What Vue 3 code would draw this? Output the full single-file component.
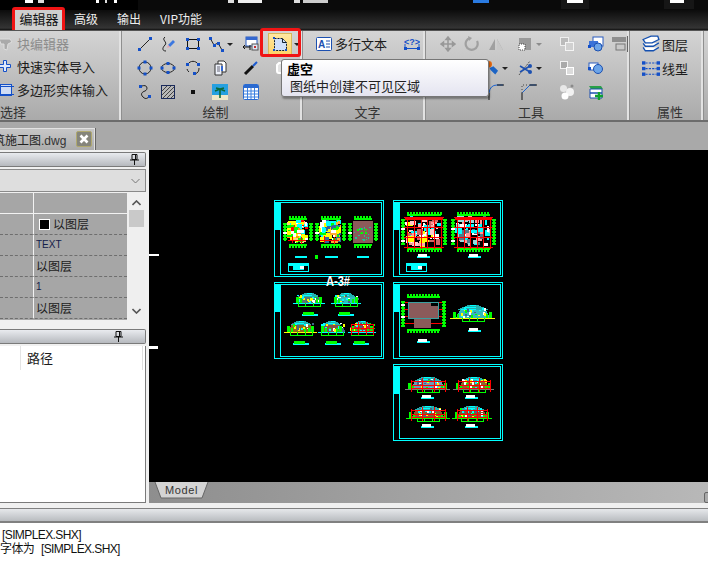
<script setup>
const B = '#1450c8';
const sq = (x, y, s = 3) => `<rect x="${x}" y="${y}" width="${s}" height="${s}" fill="${B}"/>`;

// toolbar glyphs, all on a 16x16 box
const icons = {
  line: `<path d="M3 13L13 3" stroke="#222" fill="none"/>${sq(1, 12)}${sq(12, 1)}`,
  spline: `<path d="M5 1C1 4 8 6 5 9S2 15 6 15" stroke="#222" fill="none"/><path d="M8 9l5-5 2 2-5 5z" fill="#3c78e0"/><path d="M8 9l2 2-3 1z" fill="#e8a0b0"/>`,
  rect: `<rect x="2.5" y="3.5" width="11" height="9" stroke="#111" fill="none"/>${sq(1, 2)}${sq(12, 2)}${sq(1, 11)}${sq(12, 11)}`,
  poly: `<path d="M2 2L6 9L10 7L14 14" stroke="#222" fill="none"/>${sq(1, 1)}${sq(5, 8)}${sq(9, 6)}${sq(13, 13)}`,
  xref: `<rect x="3" y="1" width="11" height="9" fill="#fff" stroke="#2a5cc0"/><rect x="3" y="1" width="11" height="3" fill="#3468d0"/><path d="M0 11h7M2 9l-2 2 2 2M7 9v5" stroke="#111" fill="none"/><rect x="9" y="8" width="6" height="6" fill="#dfe6f5" stroke="#555"/><rect x="11" y="10" width="2" height="2" fill="#c03030"/>`,
  wipe: `<path d="M2.5 2.5h8l4 4v8h-12z" fill="#cfe0fb" stroke="#123" stroke-dasharray="2 1"/><path d="M10.5 2.5v4h4" fill="none" stroke="#123"/>${sq(1, 1, 2)}${sq(13, 13, 2)}${sq(1, 13, 2)}`,
  circle: `<circle cx="8" cy="8" r="6" stroke="#222" fill="none"/>${sq(6.5, 0.5)}${sq(6.5, 12.5)}${sq(0.5, 6.5)}${sq(12.5, 6.5)}`,
  ellipse: `<ellipse cx="8" cy="8" rx="6.5" ry="4.5" stroke="#222" fill="none"/>${sq(6.5, 2)}${sq(6.5, 11)}${sq(0.5, 6.5)}${sq(12.5, 6.5)}`,
  arc: `<path d="M3 4A6 6 0 0 1 13 4M14 8A6 6 0 0 1 10 14M2 9A6 6 0 0 0 4 12" stroke="#222" fill="none"/>${sq(1, 3)}${sq(12, 3)}${sq(8, 12)}`,
  doc: `<path d="M6 1h6l2 2v9H6z" fill="#fff" stroke="#333"/><path d="M3 4h7v11H3z" fill="#eef2fb" stroke="#333"/><path d="M5 7h3M5 9h3M5 11h3" stroke="#667"/><rect x="9" y="6" width="2" height="5" fill="#3468d0"/>`,
  brush: `<path d="M2 14L10 6" stroke="#111" stroke-width="3"/><path d="M10 6l4-4" stroke="#1c5bd0" stroke-width="2"/>`,
  cloud: `<path d="M4 3h8a2 2 0 0 1 2 2v8H4a2 2 0 0 1-2-2V5z" fill="#e4e4e4" stroke="#fff" stroke-width="2"/>`,
  squiggle: `<path d="M5 2c6-2 6 4 3 5S3 10 6 13s5 1 6-1" stroke="#222" fill="none"/>${sq(2, 1)}${sq(11, 11)}`,
  hatch: `<rect x="1.5" y="1.5" width="13" height="13" fill="#b8b8b8" stroke="#1a2a5a"/><path d="M2 7l5-5M2 11l9-9M3 14L14 3M7 14l7-7M11 14l3-3" stroke="#444" fill="none"/>`,
  point: `<rect x="6" y="6" width="4" height="4" fill="#111"/>`,
  palm: `<rect x="0" y="0" width="16" height="16" fill="#26a0e0"/><rect y="11" width="16" height="5" fill="#f0e8c8"/><path d="M8 14V6M3 7l5-2 5 2M4 4l4 1 4-1" stroke="#0c6a3a" stroke-width="1.6" fill="none"/>`,
  table: `<rect x="0.5" y="0.5" width="15" height="15" rx="1" fill="#fff" stroke="#2a6ad0"/><rect x="1" y="1" width="14" height="3" fill="#2a6ad0"/><path d="M1 7h14M1 10h14M1 13h14M4.500 4v11M8 4v11M11.500 4v11" stroke="#3c80e0"/>`,
  mtext: `<rect x="0.500" y="1.500" width="15" height="13" rx="1" fill="#fff" stroke="#1c50b0"/><text x="2" y="12" font-size="10" font-weight="700" font-family="Liberation Sans" fill="#1c50b0">A</text><path d="M10 5h4M10 8h4M10 11h4" stroke="#1c50b0"/>`,
  dim: `<path d="M1 12.500h14" stroke="${B}"/>${sq(0, 11)}${sq(13, 11)}<path d="M1 8v4M15 8v4" stroke="${B}"/><text x="8" y="9" text-anchor="middle" font-size="9" font-weight="700" font-family="Liberation Sans" fill="${B}">&lt;?&gt;</text>`,
  move: `<path d="M8 1v14M1 8h14M8 1L6 3.500h4zM8 15l-2-2.500h4zM1 8l2.500-2v4zM15 8l-2.500-2v4z" stroke="#989898" stroke-width="1.500" fill="#989898"/>`,
  rotate: `<path d="M6 2a6 6 0 1 0 7 3" stroke="#a0a0a0" stroke-width="2.200" fill="none"/><path d="M4 0l4 2-3 3z" fill="#a0a0a0"/>`,
  mirror: `<path d="M7 3v11H1zM9 3v11h6z" fill="#a0a0a0"/><path d="M9 3v11h6z" fill="#c8c8c8"/>`,
  array: `<rect x="2" y="2" width="12" height="12" fill="#9a9a9a"/><rect x="2" y="8" width="6" height="6" fill="#fff" stroke="#444" stroke-dasharray="1 1"/>`,
  stack: `<rect x="1.500" y="1.500" width="8" height="8" fill="#bbb" stroke="#eee"/><rect x="6.500" y="6.500" width="8" height="8" fill="#d0d0d0" stroke="#f4f4f4"/>`,
  stack2: `<rect x="1.500" y="1.500" width="7" height="7" fill="#aaa" stroke="#f2f2f2"/><rect x="7.500" y="7.500" width="7" height="7" fill="#dcdcdc" stroke="#fff"/>`,
  copy: `<rect x="5" y="1" width="10" height="9" fill="#fff" stroke="#2a5cc0"/><rect x="1" y="5" width="9" height="6" fill="#3a72d8"/><circle cx="10" cy="11" r="4" fill="#6ca4e8" stroke="#1c50b0"/><rect x="0" y="9" width="3" height="3" fill="#1450c8"/>`,
  copy2: `<rect x="1" y="3" width="9" height="7" fill="#fff" stroke="#2a5cc0"/><circle cx="10" cy="9" r="4.500" fill="#6ca4e8" stroke="#1c50b0"/><rect x="0" y="7" width="3" height="3" fill="#1450c8"/>`,
  small: `<rect x="0" y="1" width="14" height="5" fill="#8e8e8e"/><rect x="4" y="8" width="9" height="6" fill="#c8c8c8" stroke="#777"/><path d="M15.500 0v16" stroke="#666"/>`,
  paint: `<circle cx="5" cy="4" r="3.500" fill="#e86a10"/><path d="M6 8l4-2 5 5-3 4-5-5z" fill="#1c64c4"/>`,
  scissors: `<path d="M2 15L13 1" stroke="#555" stroke-dasharray="2 1"/><path d="M3 6l10 6M3 12l10-6" stroke="#1c50b0" stroke-width="1.500"/><circle cx="13" cy="6" r="2" fill="#1c50b0"/><circle cx="13" cy="12" r="2" fill="#1c50b0"/>`,
  circles: `<circle cx="4.500" cy="4.500" r="3.500" fill="#e8e8e8"/><circle cx="11" cy="8" r="4" fill="#f2f2f2"/><circle cx="6" cy="12" r="3.500" fill="#fff"/><circle cx="13" cy="2" r="1.500" fill="#8a8a8a"/>`,
  stackAdd: `<path d="M1 2h12l2 3H3z" fill="#28a048"/><path d="M2 5h12v4H2zM2 9h12v5H2z" fill="#fff" stroke="#1c50b0"/><path d="M7 12h8M11 8v8" stroke="#10a030" stroke-width="2.400"/>`,
  fillet: `<path d="M15 1H9Q2 1 1 9" stroke="#1c64d0" fill="none"/><path d="M9 1h7M1 9v7" stroke="#111" fill="none"/>`,
  chamfer: `<path d="M15 1H9L1 9" stroke="#1c64d0" fill="none"/><path d="M9 1h7M1 9v7" stroke="#111" fill="none"/><path d="M1 9V1h8" stroke="#444" stroke-dasharray="1 2" fill="none"/>`,
  layer: `<path d="M1 4l7-3h6l1 3-6 3H3zM1 7.500l2 2.500h7l5-3M1 11l2 3h7l5-3" fill="#fff" stroke="#1450b0" stroke-width="1.200"/>`,
  ltype: `<path d="M3 3.500h10M3 8.500h10M3 13.500h10" stroke="${B}" stroke-dasharray="2 1"/>${sq(0, 2)}${sq(13, 2)}${sq(0, 7)}${sq(13, 7)}${sq(0, 12)}${sq(13, 12)}`
};

const drawTools = [
  ['line', null], ['spline', null], ['rect', null], ['poly', 'caret'], ['xref', null], ['wipe', 'hot'],
  ['circle', null], ['ellipse', null], ['arc', null], ['doc', null], ['brush', null], ['cloud', null],
  ['squiggle', null], ['hatch', null], ['point', null], ['palm', null], ['table', null], [null, null]
];

const editTools = [
  ['move', null], ['rotate', null], ['mirror', null], ['array', 'caret'], ['stack', null], ['copy', null], ['small', null],
  [null, null], [null, null], ['paint', 'caret'], ['scissors', 'caret'], ['stack2', null], ['copy2', null], [null, null],
  [null, null], [null, null], ['fillet', null], ['chamfer', null], ['circles', null], ['stackAdd', null], [null, null]
];

const topBits = [
  [25, 8, '#fff'], [38, 6, '#ddd'], [96, 3, '#fff'], [105, 2, '#ddd'], [114, 3, '#fff'],
  [228, 6, '#ddd'], [238, 24, '#eee'], [294, 6, '#ddd'], [303, 25, '#ccc'],
  [473, 16, '#2a7ae0'], [567, 16, '#fff'], [670, 14, '#fff']
];

const rows = [
  { text: '以图层', swatch: true },
  { text: 'TEXT', small: true },
  { text: '以图层' },
  { text: '1', small: true },
  { text: '以图层' }
];

// --- drawing sheets on the model canvas ---
const G = '#00ff00', R = '#ff0000', C = '#00ffff', Y = '#ffff00', W = '#ffffff';
const parts = [];
let seed = 7;
const rnd = n => {
  seed = (seed * 16807) % 2147483647;
  return seed % n;
};
const r = (x, y, w, h, c) => parts.push({ x, y, w, h, c });

function frame(x, y, w, h, c) {
  r(x, y, w, 1, c);
  r(x, y + h - 1, w, 1, c);
  r(x, y, 1, h, c);
  r(x + w - 1, y, 1, h, c);
}

function sheet(x, y) {
  frame(x, y, 110, 77, C);
  frame(x + 6, y + 2, 102, 73, C);
  r(x + 1, y + 2, 5, 28, C);
}

function walls(x, y, w, h) {
  const m = 4;
  r(x + m + 2, y + 2, w - 2 * m - 4, 2, G);
  r(x + m + 2, y + h - 4, w - 2 * m - 4, 2, G);
  r(x + 1, y + m + 3, 2, h - 2 * m - 6, G);
  r(x + w - 3, y + m + 3, 2, h - 2 * m - 6, G);
  for (let i = x + m + 2; i < x + w - m - 2; i += 3) {
    r(i, y, 2, 3, G);
    r(i, y + h - 3, 2, 3, G);
  }
  for (let j = y + m + 3; j < y + h - m - 3; j += 3) {
    r(x, j, 4, 2, j % 4 ? G : W);
    r(x + w - 4, j, 4, 2, G);
  }
}

function plan(x, y, w, h, colors, density, grid) {
  const ix = x + 4, iy = y + 4, iw = w - 8, ih = h - 8;
  for (let i = 0; i < density; i++) {
    const pw = 2 + rnd(6), ph = 2 + rnd(5);
    r(ix + rnd(iw - pw), iy + rnd(ih - ph), pw, ph, colors[rnd(colors.length)]);
  }
  walls(x, y, w, h);
  if (grid) {
    for (let i = 0; i < 6; i++) r(ix + 2 + Math.round((i * (iw - 4)) / 5), y + 6, 1, h - 9, R);
    for (let j = 0; j < 4; j++) r(x + 3, iy + 1 + Math.round((j * (ih - 2)) / 3), w - 6, 1, R);
    r(ix, iy + 2, iw, 2, R);
  } else {
    r(ix + 1, y + h - 8, iw - 4, 1, R);
    r(ix + 5, y + h - 12, 1, 7, R);
    r(ix + iw - 8, y + h - 11, 1, 7, R);
  }
}

function brownPlan(x, y, w, h) {
  r(x + 5, y + 5, w - 10, h - 10, '#8b5a5a');
  for (let i = 0; i < 24; i++) r(x + 6 + rnd(w - 14), y + 6 + rnd(h - 14), 1 + rnd(2), 1 + rnd(2), i % 3 ? '#22c090' : G);
  walls(x, y, w, h);
}

function elev(x, y, w, h, body, ground, redFrame) {
  const base = y + h - 5;
  const cx = x + Math.round(w / 2);
  const wide = w * 0.38;
  for (let j = 0; j < h - 5; j++) {
    const t = (j + 1) / (h - 5);
    const half = Math.round(t < 0.4 ? wide * (0.25 + t * 1.6) : wide * (0.75 + (t - 0.4) * 0.4));
    const roof = t < 0.45;
    r(cx - half, y + j, half * 2, 1, roof ? '#22b0b0' : body);
    if (roof && j % 2 === 0) r(cx - half + 3, y + j, half, 1, C);
  }
  for (let i = 0; i < 26; i++) {
    r(cx - 12 + rnd(24), y + 2 + rnd(h - 8), 2, 1 + rnd(3), [W, G, Y, C, '#446688'][rnd(5)]);
  }
  r(x, base, w, 1, ground);
  r(x + 3, base - 6, 3, 6, G);
  r(x + 7, base - 4, 2, 4, G);
  r(x + w - 6, base - 6, 3, 6, G);
  r(x + w - 9, base - 4, 2, 4, G);
  r(cx - 11, y + h - 2, 22, 1, G);
  r(cx - 11, base, 1, 4, G);
  r(cx + 11, base, 1, 4, G);
  r(cx - 4, base, 1, 3, G);
  r(cx + 4, base, 1, 3, G);
  if (redFrame) {
    const half = Math.round(w * 0.38);
    r(cx - half, base - 8, half * 2, 1, R);
    r(cx - half, base - 4, half * 2, 1, R);
    r(cx - half, base - 1, half * 2, 1, R);
    r(cx - half, y + 3, 1, h - 5, R);
    r(cx + half, y + 3, 1, h - 5, R);
    r(cx - Math.round(half / 3), y + 1, 1, h - 3, R);
    r(cx + Math.round(half / 3), y + 1, 1, h - 3, R);
  }
}

function label(x, y, w, head) {
  r(x, y + 2, w, 2, C);
  r(x + 1, y, Math.round(w * 0.7), 3, head);
}

function stamp(x, y) {
  frame(x, y, 21, 9, C);
  r(x + 1, y + 1, 19, 2, C);
  r(x + 5, y + 2, 11, 5, C);
  r(x + 2, y + 4, 3, 4, '#000');
  r(x + 12, y + 3, 4, 3, W);
}

const warm = [Y, C, R, '#ff9900', '#ffcc88', W, G, Y];
const pink = ['#ff9999', C, Y, '#ffcccc', '#ffaaaa', W, '#cc6666'];

sheet(274, 200);
plan(283, 216, 30, 32, warm, 85, false);
plan(315, 216, 31, 32, [C, Y, W, '#ffaa33', G, '#336699'], 75, false);
brownPlan(348, 216, 30, 32);
r(295, 256, 12, 2, C); r(325, 256, 13, 2, C); r(357, 256, 12, 2, C);
r(315, 255, 3, 4, G);
stamp(288, 263);

sheet(274, 282);
elev(293, 293, 32, 15, '#5a7a70', C, false);
elev(331, 293, 30, 15, '#33bbbb', C, false);
label(302, 312, 16, G); label(338, 312, 16, G);
elev(284, 321, 33, 16, '#8a6a20', Y, false);
elev(318, 321, 27, 16, '#8a5040', C, false);
elev(348, 321, 28, 16, '#aa3344', C, true);
label(293, 341, 16, G); label(325, 341, 16, G); label(353, 341, 16, G);

sheet(393, 200);
plan(401, 212, 46, 40, pink, 70, true);
plan(451, 212, 45, 40, [C, '#99dddd', W, '#ff9999', '#557788'], 60, true);
label(417, 254, 13, W); label(468, 254, 13, W);
stamp(406, 263);

sheet(393, 282);
for (let i = 0; i < 4; i++) r(403, 302 + i * 7, 42, 1, R);
walls(401, 294, 45, 39);
r(408, 302, 23, 13, '#8b5a5a'); r(408, 306, 31, 13, '#8b5a5a'); r(414, 319, 17, 9, '#8b5a5a');
frame(408, 302, 31, 17, '#3aa0a0');
elev(450, 305, 45, 18, '#33bbbb', Y, false);
label(417, 339, 13, W); label(468, 328, 13, W);

sheet(393, 364);
elev(405, 377, 45, 17, '#6a9ab8', '#777', true);
elev(453, 377, 41, 17, '#8a6a30', '#777', true);
label(421, 395, 13, W); label(465, 395, 13, W);
elev(406, 406, 44, 17, '#8a5a30', G, true);
elev(452, 406, 40, 17, '#8a5030', G, true);
label(421, 424, 13, W); label(465, 424, 13, W);
</script>

<template>
  <div class="app">
    <svg class="top-strip" width="708" height="10">
      <rect x="138" width="570" height="10" fill="#0a0a0a" />
      <rect x="561" width="28" height="9" fill="#161616" />
      <rect x="664" width="30" height="9" fill="#161616" />
      <rect v-for="b in topBits" :key="b[0]" :x="b[0]" :width="b[1]" height="3" :fill="b[2]" />
    </svg>

    <div class="menu">
      <span class="menu-item active">编辑器</span>
      <span class="menu-item">高级</span>
      <span class="menu-item">输出</span>
      <span class="menu-item">VIP功能</span>
      <i class="red-box menu-mark"></i>
    </div>

    <div class="ribbon">
      <section class="group g-select">
        <div class="list">
          <div class="list-row disabled">
            <svg width="16" height="16" viewBox="0 0 16 16"><path d="M1 3h11l2 3-4 2-1 6-3-1V8H3z" fill="#aaa" stroke="#ddd" /></svg>
            块编辑器
          </div>
          <div class="list-row">
            <svg width="16" height="16" viewBox="0 0 16 16"><path d="M5.500 1.500h3v4h4v3h-4v4h-3v-4h-4v-3h4z" fill="#dfe9fb" stroke="#1450c8" /></svg>
            快速实体导入
          </div>
          <div class="list-row">
            <svg width="16" height="16" viewBox="0 0 16 16"><rect x="2.500" y="2.500" width="11" height="11" fill="#cfdcf5" stroke="#1450c8" /><path d="M0 4.500h16M0 12.500h16" stroke="#1450c8" /></svg>
            多边形实体输入
          </div>
        </div>
        <div class="group-name">选择</div>
      </section>

      <section class="group g-draw">
        <div class="tools draw-grid">
          <div v-for="(t, i) in drawTools" :key="i" class="tool" :class="{ hot: t[1] === 'hot' }">
            <svg v-if="t[0]" width="16" height="16" viewBox="0 0 16 16" v-html="icons[t[0]]"></svg>
            <i v-if="t[1]" class="caret"></i>
          </div>
        </div>
        <div class="group-name">绘制</div>
      </section>

      <section class="group g-text">
        <div class="text-row">
          <svg width="16" height="16" viewBox="0 0 16 16" v-html="icons.mtext"></svg>
          <span class="mtext-label">多行文本</span>
          <svg class="dim-icon" width="16" height="16" viewBox="0 0 16 16" v-html="icons.dim"></svg>
        </div>
        <div class="group-name">文字</div>
      </section>

      <section class="group g-edit">
        <div class="tools edit-grid">
          <div v-for="(t, i) in editTools" :key="i" class="tool">
            <svg v-if="t[0]" width="16" height="16" viewBox="0 0 16 16" v-html="icons[t[0]]"></svg>
            <i v-if="t[1]" class="caret" :class="{ faint: t[0] === 'array' }"></i>
          </div>
        </div>
        <div class="group-name">工具</div>
      </section>

      <section class="group g-prop">
        <div class="list prop-list">
          <div class="list-row">
            <svg width="18" height="18" viewBox="0 0 16 16" v-html="icons.layer"></svg>
            图层
          </div>
          <div class="list-row">
            <svg width="18" height="18" viewBox="0 0 16 16" v-html="icons.ltype"></svg>
            线型
          </div>
        </div>
        <div class="group-name">属性</div>
      </section>

      <section class="group g-rest"></section>

      <i class="red-box tool-mark"></i>
      <div class="tooltip">
        <strong>虚空</strong>
        <span>图纸中创建不可见区域</span>
      </div>
    </div>

    <div class="tabs">
      <div class="doc-tab">
        <span class="doc-name">筑施工图<em>.dwg</em></span>
        <span class="doc-close">
          <svg width="10" height="10" viewBox="0 0 10 10"><path d="M1.500 1.500l7 7M8.500 1.500l-7 7" stroke="#fff" stroke-width="2.600" /></svg>
        </span>
      </div>
    </div>

    <div class="main">
      <aside class="side">
        <div class="title-bar">
          <svg class="pin" width="9" height="11" viewBox="0 0 9 11"><path d="M2 .5h5v5H2zM0 6h9M4.500 6v5M5.500 1v4" stroke="#111" fill="none" /></svg>
        </div>
        <div class="combo">
          <svg width="9" height="6" viewBox="0 0 9 6"><path d="M.5 1l4 4 4-4" stroke="#777" fill="none" /></svg>
        </div>
        <div class="props">
          <div class="table">
            <div class="t-head"><span></span><span></span></div>
            <div v-for="(row, i) in rows" :key="i" class="t-row">
              <span></span>
              <span class="t-val" :class="{ small: row.small }">
                <i v-if="row.swatch" class="swatch"></i>{{ row.text }}
              </span>
            </div>
          </div>
          <div class="scroll">
            <svg width="9" height="6" viewBox="0 0 9 6"><path d="M.5 5l4-4 4 4" stroke="#555" stroke-width="1.600" fill="none" /></svg>
            <i class="thumb"></i>
            <svg class="scroll-down" width="9" height="6" viewBox="0 0 9 6"><path d="M.5 1l4 4 4-4" stroke="#555" stroke-width="1.600" fill="none" /></svg>
          </div>
        </div>
        <div class="title-bar second">
          <svg class="pin" width="9" height="11" viewBox="0 0 9 11"><path d="M2 .5h5v5H2zM0 6h9M4.500 6v5M5.500 1v4" stroke="#111" fill="none" /></svg>
        </div>
        <div class="file-list">
          <div class="file-head"><span class="file-col">路径</span></div>
        </div>
      </aside>

      <div class="canvas-wrap">
        <div class="canvas">
          <svg width="559" height="332" viewBox="149 150 559 332" shape-rendering="crispEdges">
            <rect x="149" y="254" width="10" height="2" fill="#fff" />
            <rect x="149" y="346" width="9" height="3" fill="#fff" />
            <rect v-for="(p, i) in parts" :key="i" :x="p.x" :y="p.y" :width="p.w" :height="p.h" :fill="p.c" />
            <text x="326" y="286" class="sheet-title" textLength="24" lengthAdjust="spacingAndGlyphs">A-3#</text>
          </svg>
        </div>
        <div class="model-bar">
          <svg class="model-tab" width="56" height="18" viewBox="0 0 56 18">
            <path d="M1 0l6 16h41l6-16" fill="#d4d4d4" stroke="#666" />
          </svg>
          <span class="model-label">Model</span>
          <i class="scroll-end"></i>
        </div>
      </div>
    </div>

    <div class="cmd-head"></div>
    <div class="cmd">
      <div>[SIMPLEX.SHX]</div>
      <div class="cmd-clip">字体为 [SIMPLEX.SHX]</div>
    </div>
  </div>
</template>

<style>
html,
body {
  margin: 0;
  background: #fff;
}
</style>

<style scoped>
.app {
  position: relative;
  width: 708px;
  height: 570px;
  overflow: hidden;
  display: flex;
  flex-direction: column;
  background: #f0f0f0;
  font-family: "Noto Sans CJK SC", "Liberation Sans", sans-serif;
  font-size: 13px;
  color: #1c1c1c;
}

.top-strip {
  display: block;
  flex: none;
  background: #000;
}

.menu {
  position: relative;
  flex: none;
  height: 20px;
  display: flex;
  align-items: center;
  padding-left: 15px;
  box-sizing: border-box;
  background: linear-gradient(#0c0c0c, #343434 90%, #111);
  color: #eee;
  font-size: 12px;
}

.menu-item {
  margin-right: 19px;
  line-height: 18px;
  padding-bottom: 2px;
}

.menu-item.active {
  width: 48px;
  margin-right: 11px;
  text-align: center;
  font-size: 13px;
  background: #cfcfcf;
  color: #111;
}

.red-box {
  position: absolute;
  border: 3px solid #f01414;
  border-radius: 3px;
  box-sizing: border-box;
}

.menu-mark {
  left: 12px;
  top: -3px;
  width: 53px;
  height: 26px;
}

.ribbon {
  position: relative;
  flex: none;
  height: 92px;
  display: flex;
  box-sizing: border-box;
  border-top: 1px solid #555;
  border-bottom: 2px solid #6c6c6c;
  background: linear-gradient(#d4d4d4, #aaaaaa);
}

.group {
  position: relative;
  flex: none;
  box-sizing: border-box;
  border-right: 1px solid #8f8f8f;
  box-shadow: inset -2px 0 0 #e2e2e2;
  margin-right: 1px;
}

.g-select { width: 122px; }
.g-draw { width: 180px; }
.g-text { width: 122px; }
.g-edit { width: 203px; }
.g-prop { width: 73px; }
.g-rest { width: 6px; border: 0; box-shadow: none; }

.group-name {
  position: absolute;
  left: 6px;
  right: 0;
  top: 73px;
  text-align: center;
  font-size: 13px;
  line-height: 16px;
  color: #333;
}

.g-select .group-name {
  text-align: left;
  left: 0;
}

.list {
  padding-top: 1px;
}

.list-row {
  display: flex;
  align-items: center;
  gap: 3px;
  height: 23px;
  margin-left: -2px;
  white-space: nowrap;
}

.list-row.disabled {
  color: #8c8c8c;
}

.prop-list {
  padding: 1px 0 0 13px;
}

.prop-list .list-row {
  gap: 2px;
  height: 24px;
}

.tools {
  display: grid;
  grid-auto-rows: 24px;
  padding-top: 1px;
}

.draw-grid {
  grid-template-columns: 23px 24px 25px 30px 31px 34px;
  padding-left: 10px;
}

.edit-grid {
  grid-template-columns: 25px 24px 24px 42px 33px 25px 24px;
  padding-left: 8px;
}

.tool {
  position: relative;
  display: flex;
  align-items: center;
  justify-content: center;
  gap: 3px;
}

.tool.hot {
  justify-content: flex-start;
  padding-left: 3px;
}

.tool.hot svg {
  padding: 2px 3px;
  background: linear-gradient(#ffe9a0, #ffd468);
  outline: 1px solid #d8b858;
}

.caret {
  width: 0;
  height: 0;
  border-left: 3px solid transparent;
  border-right: 3px solid transparent;
  border-top: 3px solid #222;
}

.caret.faint {
  border-top-color: #8c8c8c;
}

.text-row {
  display: flex;
  align-items: center;
  height: 23px;
  margin-top: 1px;
  padding-left: 12px;
}

.mtext-label {
  margin-left: 3px;
}

.dim-icon {
  margin-left: 17px;
}

.tool-mark {
  left: 260px;
  top: -3px;
  width: 41px;
  height: 29px;
}

.tooltip {
  position: absolute;
  left: 281px;
  top: 28px;
  width: 208px;
  height: 38px;
  box-sizing: border-box;
  padding: 0 0 0 5px;
  display: flex;
  flex-direction: column;
  border: 1px solid #767676;
  border-radius: 3px;
  background: linear-gradient(#ffffff, #e4e4f0);
  box-shadow: 1px 2px 2px rgba(0, 0, 0, 0.35);
  line-height: 17px;
  color: #222;
  z-index: 2;
}

.tooltip strong {
  font-size: 13px;
  color: #000;
}

.tooltip span {
  padding-left: 3px;
}

.tabs {
  flex: none;
  height: 28px;
  box-sizing: border-box;
  padding-top: 6px;
  background: #a9a9a9;
}

.doc-tab {
  width: 96px;
  height: 22px;
  box-sizing: border-box;
  display: flex;
  align-items: center;
  background: linear-gradient(#c8c8c8, #acacac);
  border-right: 1px solid #666;
  box-shadow: inset 0 1px 0 #e2e2e2, inset -1px 0 0 #e0e0e0;
  overflow: hidden;
}

.doc-name {
  margin-left: -7px;
  width: 83px;
  flex: none;
  font-size: 12px;
  white-space: nowrap;
  color: #222;
}

.doc-name em {
  font-family: "Liberation Sans", sans-serif;
  font-style: normal;
  font-size: 12px;
  color: #333;
}

.doc-close {
  flex: none;
  width: 16px;
  height: 16px;
  display: flex;
  align-items: center;
  justify-content: center;
  border-radius: 2px;
  background: #85857c;
  border: 1px solid #b0a96e;
  box-sizing: border-box;
}

.main {
  flex: none;
  height: 353px;
  display: flex;
}

.side {
  flex: none;
  width: 149px;
  box-sizing: border-box;
  padding: 2px 3px 0 0;
  display: flex;
  flex-direction: column;
  background: #f0f0f0;
}

.title-bar {
  position: relative;
  flex: none;
  height: 15px;
  box-sizing: border-box;
  border: 1px solid #7a7a7a;
  border-left: 0;
  border-radius: 0 2px 2px 0;
  background: linear-gradient(#e9ebef, #b6b9be);
}

.pin {
  position: absolute;
  right: 6px;
  top: 1px;
}

.title-bar.second {
  margin-top: 9px;
}

.title-bar.second .pin {
  right: 22px;
}

.combo {
  flex: none;
  height: 23px;
  margin-top: 2px;
  box-sizing: border-box;
  display: flex;
  align-items: center;
  justify-content: flex-end;
  padding-right: 5px;
  background: #dedede;
  border: 1px solid #8a8a8a;
  border-left: 0;
}

.props {
  flex: none;
  height: 127px;
  margin-top: 1px;
  display: flex;
}

.table {
  width: 127px;
  background: #a6a6a6;
}

.t-head,
.t-row {
  display: grid;
  grid-template-columns: 34px 1fr;
}

.t-head {
  height: 21px;
  box-sizing: border-box;
  border-bottom: 1px solid #f2f2f2;
}

.t-head span:first-child,
.t-row span:first-child {
  border-right: 1px solid #f2f2f2;
}

.t-row {
  height: 21px;
  box-sizing: border-box;
  border-bottom: 1px dashed #6e6e6e;
}

.t-val {
  display: flex;
  align-items: center;
  padding-left: 2px;
  font-size: 12px;
  line-height: 20px;
}

.t-val.small {
  font-family: "Liberation Sans", sans-serif;
  font-size: 10px;
  color: #14204a;
}

.swatch {
  width: 9px;
  height: 9px;
  margin: 0 3px 0 3px;
  background: #000;
  border: 1px solid #fff;
}

.scroll {
  width: 18px;
  display: flex;
  flex-direction: column;
  align-items: center;
  padding-top: 7px;
  box-sizing: border-box;
  background: #efefef;
}

.thumb {
  width: 15px;
  height: 17px;
  margin-top: 4px;
  background: #c9c9c9;
}

.scroll-down {
  margin-top: auto;
  margin-bottom: 6px;
}

.file-list {
  flex: 1;
  margin-top: 2px;
  box-sizing: border-box;
  background: #fff;
  border-right: 1px solid #7a7a7a;
  border-bottom: 1px solid #7a7a7a;
}

.file-head {
  height: 24px;
  margin-right: 2px;
  padding-left: 20px;
  border-right: 1px solid #ddd;
}

.file-col {
  display: block;
  height: 24px;
  padding-left: 6px;
  line-height: 24px;
  border-left: 1px solid #e4e4e4;
}

.canvas-wrap {
  flex: 1;
  display: flex;
  flex-direction: column;
}

.canvas {
  flex: none;
  height: 332px;
  background: #000;
}

.canvas svg {
  display: block;
}

.sheet-title {
  font: 700 15px "Liberation Sans", sans-serif;
  fill: #fff;
}

.model-bar {
  position: relative;
  flex: 1;
  background: linear-gradient(90deg, #8e8e8e, #b8b8b8);
}

.model-tab {
  position: absolute;
  left: 5px;
  top: 0;
}

.model-label {
  position: absolute;
  left: 16px;
  top: 1px;
  font-family: "Liberation Sans", sans-serif;
  font-size: 11px;
  letter-spacing: 0.6px;
  line-height: 14px;
  color: #333;
}

.scroll-end {
  position: absolute;
  right: -4px;
  top: 10px;
  width: 8px;
  height: 11px;
  border: 1px solid #666;
  border-radius: 2px;
  box-sizing: border-box;
  background: #aaa;
}

.cmd-head {
  flex: none;
  height: 15px;
  margin-top: 5px;
  box-sizing: border-box;
  border-top: 1px solid #808080;
  border-bottom: 2px solid #808080;
  background: linear-gradient(#e6e8eb, #b9bcc0);
}

.cmd {
  flex: 1;
  padding: 5px 0 0 2px;
  background: #fff;
  font-family: "Liberation Sans", "Noto Sans CJK SC", sans-serif;
  font-size: 12px;
  letter-spacing: -0.6px;
  word-spacing: 4px;
  line-height: 14px;
  color: #111;
}

.cmd-clip {
  margin-left: -2px;
}
</style>
